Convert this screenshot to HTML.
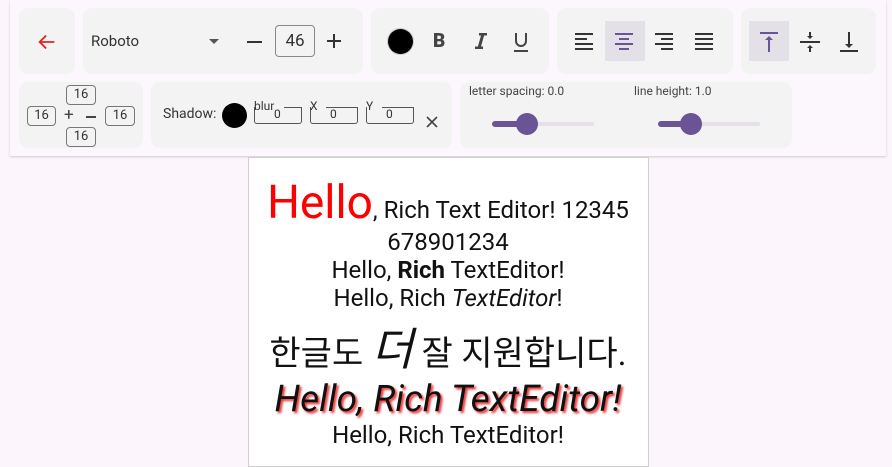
<!DOCTYPE html>
<html><head><meta charset="utf-8"><style>
*{box-sizing:border-box;margin:0;padding:0}
body{width:892px;height:457px;overflow:hidden;background:#fcf6fc;font-family:"Roboto","Liberation Sans","Noto Sans CJK KR",sans-serif;position:relative;color:#222}
.panel{position:absolute;left:10px;top:0;width:876px;height:156px;background:#fcf7fc;box-shadow:0 1px 2px rgba(0,0,0,.18)}
.card{position:absolute;background:#f4f3f4;border-radius:9px}
.ab{position:absolute}
.box{position:absolute;border:1px solid #777;border-radius:4px;font-size:13px;text-align:center;color:#333;background:transparent}
.t{position:absolute;left:248px;width:400px;text-align:center;white-space:nowrap;color:#111}
</style></head><body>
<div class="panel"></div>
<!-- row1 -->
<div class="card" style="left:19px;top:8px;width:56px;height:66px"></div>
<svg class="ab" style="left:36px;top:31px" width="22" height="22" viewBox="0 0 24 24"><path d="M20 12H5M11 5l-7 7 7 7" fill="none" stroke="#e02424" stroke-width="2"/></svg>
<div class="card" style="left:83px;top:8px;width:280px;height:66px"></div>
<div class="ab" style="left:91px;top:32px;font-size:15px;color:#333">Roboto</div>
<svg class="ab" style="left:209px;top:39px" width="12" height="6"><path d="M0 0h10l-5 5z" fill="#555"/></svg>
<div class="ab" style="left:247px;top:41px;width:15px;height:2px;background:#333"></div>
<div class="box" style="left:275px;top:25px;width:40px;height:32px;line-height:30px;font-size:17px;border-color:#888">46</div>
<svg class="ab" style="left:326px;top:33px" width="16" height="16"><path d="M8 1v14M1 8h14" stroke="#333" stroke-width="2"/></svg>
<div class="card" style="left:371px;top:8px;width:178px;height:66px"></div>
<div class="ab" style="left:388px;top:29px;width:25px;height:25px;border-radius:50%;background:#000;box-shadow:0 0 0 1px #ccc"></div>
<div class="ab" style="left:433px;top:29px;font-size:19px;font-weight:900;color:#444">B</div>
<svg class="ab" style="left:474px;top:33px" width="14" height="16"><path d="M5 1h8M1 15h8M9 1L5 15" stroke="#444" stroke-width="3" fill="none"/></svg>
<svg class="ab" style="left:512px;top:32px" width="18" height="20"><path d="M4 1v8a5 5 0 0 0 10 0V1" stroke="#444" stroke-width="2" fill="none"/><path d="M2 19h14" stroke="#444" stroke-width="2"/></svg>
<div class="card" style="left:557px;top:8px;width:176px;height:66px"></div>
<div class="ab" style="left:605px;top:21px;width:40px;height:40px;background:#e4e0e7"></div>
<svg class="ab" style="left:575px;top:33px" width="20" height="18"><path d="M0 1h18M0 6h12M0 11h18M0 16h18" stroke="#333" stroke-width="2"/></svg>
<svg class="ab" style="left:615px;top:33px" width="20" height="18"><path d="M0 1h18M4 6h10M0 11h18M4 16h10" stroke="#6a5495" stroke-width="2"/></svg>
<svg class="ab" style="left:655px;top:33px" width="20" height="18"><path d="M0 1h18M6 6h12M0 11h18M6 16h12" stroke="#333" stroke-width="2"/></svg>
<svg class="ab" style="left:695px;top:33px" width="20" height="18"><path d="M0 1h18M0 6h18M0 11h18M0 16h18" stroke="#333" stroke-width="2"/></svg>
<div class="card" style="left:741px;top:8px;width:135px;height:66px"></div>
<div class="ab" style="left:749px;top:21px;width:40px;height:40px;background:#e4e0e7"></div>
<svg class="ab" style="left:759px;top:31px" width="20" height="22"><path d="M1 2h18M10 6v15" stroke="#6a5495" stroke-width="2"/><path d="M6 9l4-4 4 4z" fill="#6a5495"/></svg>
<svg class="ab" style="left:799px;top:31px" width="22" height="22"><path d="M1 11h20M11 1v6M11 15v6" stroke="#333" stroke-width="2"/><path d="M8 5l3 3 3-3zM8 17l3-3 3 3z" fill="#333"/></svg>
<svg class="ab" style="left:839px;top:31px" width="20" height="22"><path d="M1 20h18M10 1v15" stroke="#333" stroke-width="2"/><path d="M6 13l4 4 4-4z" fill="#333"/></svg>
<!-- row2 -->
<div class="card" style="left:19px;top:82px;width:124px;height:66px"></div>
<div class="box" style="left:66px;top:85px;width:30px;height:20px;line-height:18px">16</div>
<div class="box" style="left:27px;top:106px;width:29px;height:20px;line-height:18px">16</div>
<div class="box" style="left:105px;top:106px;width:30px;height:20px;line-height:18px">16</div>
<div class="box" style="left:66px;top:127px;width:30px;height:20px;line-height:18px">16</div>
<div class="ab" style="left:64px;top:105px;font-size:17px;color:#444">+</div>
<div class="ab" style="left:86px;top:116px;width:10px;height:1.5px;background:#444"></div>
<div class="card" style="left:151px;top:82px;width:301px;height:66px"></div>
<div class="ab" style="left:163px;top:106px;font-size:14px;color:#333">Shadow:</div>
<div class="ab" style="left:222px;top:103px;width:25px;height:25px;border-radius:50%;background:#000"></div>
<div class="ab" style="left:254px;top:107px;width:48px;height:17px;border:1px solid #555;border-top:none;border-radius:0 0 3px 3px"></div>
<div class="ab" style="left:284px;top:107px;width:18px;height:1px;background:#555"></div>
<div class="ab" style="left:254px;top:99px;font-size:12px;color:#333">blur</div>
<div class="ab" style="left:274px;top:107px;font-size:12px;color:#333">0</div>
<div class="ab" style="left:310px;top:107px;width:48px;height:17px;border:1px solid #555;border-top:none;border-radius:0 0 3px 3px"></div>
<div class="ab" style="left:326px;top:107px;width:32px;height:1px;background:#555"></div>
<div class="ab" style="left:310px;top:99px;font-size:12px;color:#333">X</div>
<div class="ab" style="left:330px;top:107px;font-size:12px;color:#333">0</div>
<div class="ab" style="left:366px;top:107px;width:48px;height:17px;border:1px solid #555;border-top:none;border-radius:0 0 3px 3px"></div>
<div class="ab" style="left:382px;top:107px;width:32px;height:1px;background:#555"></div>
<div class="ab" style="left:366px;top:99px;font-size:12px;color:#333">Y</div>
<div class="ab" style="left:386px;top:107px;font-size:12px;color:#333">0</div>
<svg class="ab" style="left:426px;top:116px" width="12" height="12"><path d="M1 1l10 10M11 1L1 11" stroke="#444" stroke-width="1.6"/></svg>
<div class="card" style="left:460px;top:82px;width:332px;height:66px"></div>
<div class="ab" style="left:469px;top:84px;font-size:12px;color:#444">letter spacing: 0.0</div>
<div class="ab" style="left:634px;top:84px;font-size:12px;color:#444">line height: 1.0</div>
<div class="ab" style="left:492px;top:122px;width:102px;height:4px;border-radius:2px;background:#e6dfe9"></div>
<div class="ab" style="left:492px;top:121px;width:35px;height:6px;border-radius:3px;background:#6a5495"></div>
<div class="ab" style="left:516px;top:113px;width:22px;height:22px;border-radius:50%;background:#6a5495"></div>
<div class="ab" style="left:658px;top:122px;width:102px;height:4px;border-radius:2px;background:#e6dfe9"></div>
<div class="ab" style="left:658px;top:121px;width:33px;height:6px;border-radius:3px;background:#6a5495"></div>
<div class="ab" style="left:680px;top:113px;width:22px;height:22px;border-radius:50%;background:#6a5495"></div>
<!-- editor -->
<div class="ab" style="left:248px;top:157px;width:401px;height:310px;background:#fff;border:1px solid #cfcfcf"></div>
<div class="t" style="top:176px;font-size:24px;line-height:54px"><span style="color:#f00;font-size:46px">Hello</span>, Rich Text Editor! 12345</div>
<div class="t" style="top:228px;font-size:24px;line-height:28px">678901234</div>
<div class="t" style="top:256px;font-size:24px;line-height:28px">Hello, <b>Rich</b> TextEditor!</div>
<div class="t" style="top:284px;font-size:24px;line-height:28px">Hello, Rich <i>TextEditor</i>!</div>
<div class="t" style="top:322px;font-size:34px;line-height:56px">한글도 <i style="font-size:45px">더</i> 잘 지원합니다.</div>
<div class="t" style="top:378px;font-size:37px;line-height:44px;font-style:italic;text-shadow:2px 2px 2px #e33">Hello, Rich TextEditor!</div>
<div class="t" style="top:420px;font-size:24px;line-height:30px">Hello, Rich TextEditor!</div>
</body></html>
